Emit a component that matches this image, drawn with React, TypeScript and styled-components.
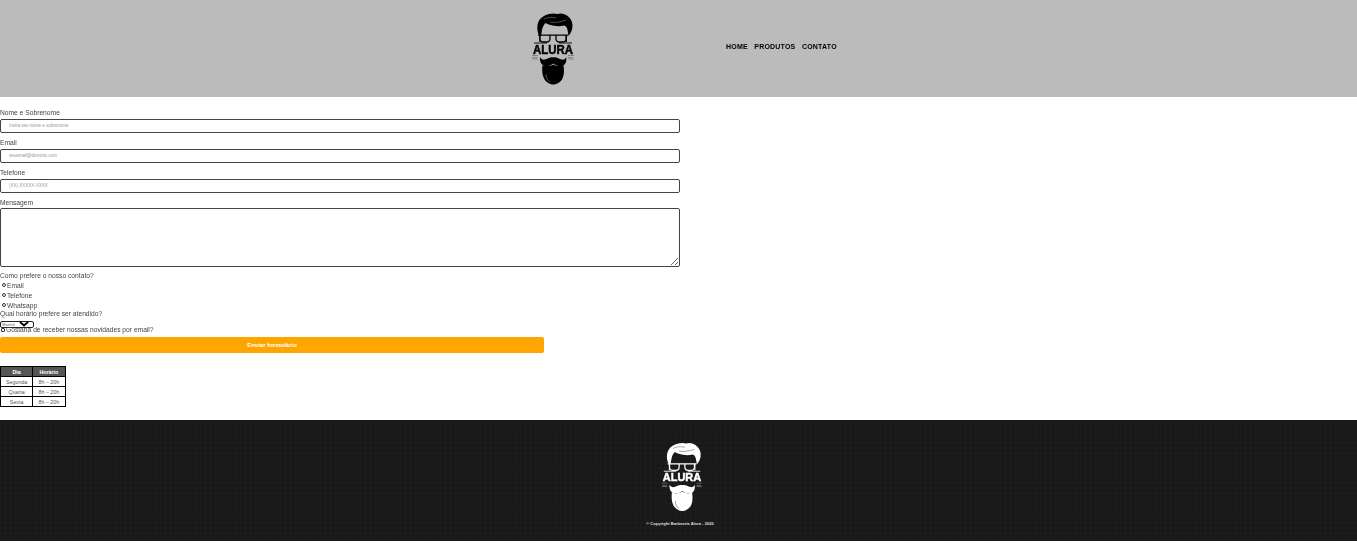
import React from "react";
import styled, { createGlobalStyle, css } from "styled-components";

const Global = createGlobalStyle`
  html, body { margin: 0; padding: 0; background: #fff; }
  body { font-family: "Liberation Sans", Arial, sans-serif; color: #333; overflow: hidden; }
  * { box-sizing: border-box; }
`;

const soft = css`
  filter: blur(0.3px);
`;

const Header = styled.header`
  height: 97px;
  background: #bbb;
  display: flex;
  align-items: center;
  padding-left: 529px;
`;
const LogoWrap = styled.div`
  width: 48px;
  height: 76px;
  display: flex;
  filter: blur(0.5px);
`;
const Nav = styled.nav`
  margin-left: 149px;
  display: flex;
  gap: 6.5px;
  margin-top: -4px;
`;
const NavLink = styled.a`
  font-size: 7px;
  font-weight: 700;
  letter-spacing: 0.2px;
  color: #000;
  ${soft}
`;
const Form = styled.form`
  width: 680px;
  padding-top: 12px;
  display: flex;
  flex-direction: column;
`;
const Label = styled.label<{ $h?: number }>`
  display: block;
  font-size: 6.7px;
  line-height: 8px;
  height: ${(p) => p.$h ?? 10}px;
  color: #444;
  ${soft}
`;
const TextField = styled.input`
  display: block;
  width: 680px;
  height: 14px;
  margin-bottom: 6px;
  border: 1px solid #444;
  border-radius: 2px;
  padding: 0 0 1px 8px;
  font-size: 4.5px;
  font-family: inherit;
  background: #fff;
  &::placeholder { color: #999; }
`;
const Area = styled.textarea`
  display: block;
  width: 680px;
  height: 59px;
  margin-bottom: 5px;
  border: 1px solid #444;
  border-radius: 2px;
  padding: 0;
  background: #fff;
`;
const Option = styled.label`
  display: flex;
  align-items: center;
  height: 10px;
  font-size: 6.7px;
  color: #444;
  padding-left: 2px;
  gap: 1px;
  ${soft}
`;
const Dot = styled.span<{ $square?: boolean }>`
  width: 4px;
  height: 4px;
  border: 1px solid #333;
  border-radius: ${(p) => (p.$square ? "1px" : "50%")};
  background: #fff;
  flex: none;
`;
const SelectBox = styled.div`
  width: 34px;
  height: 7px;
  border: 1px solid #222;
  border-radius: 2px;
  font-size: 4.2px;
  line-height: 5px;
  color: #666;
  padding-left: 1px;
  position: relative;
  background: #fff;
`;
const Chevron = styled.svg`
  position: absolute;
  left: 18px;
  top: -1px;
  width: 10px;
  height: 6px;
`;
const CheckRow = styled.label`
  display: flex;
  align-items: center;
  height: 3px;
  font-size: 6.7px;
  color: #444;
  padding-left: 1px;
  gap: 1px;
  ${soft}
`;
const Send = styled.button`
  width: 544px;
  height: 16px;
  margin-top: 6px;
  border: 0;
  border-radius: 2px;
  background: #ffa500;
  color: #fff;
  font-family: inherit;
  font-weight: 700;
  font-size: 6px;
  padding: 0;
`;
const Table = styled.table`
  margin-top: 13px;
  border-collapse: collapse;
  font-size: 5.3px;
  width: 65.5px;
  table-layout: fixed;
`;
const Th = styled.th`
  height: 10px;
  background: #555;
  color: #fff;
  border: 1px solid #000;
  padding: 0;
  font-weight: 700;
`;
const Td = styled.td`
  height: 10px;
  border: 1px solid #000;
  padding: 0;
  text-align: center;
  color: #555;
  background: #fff;
`;
const Footer = styled.footer`
  margin-top: 13px;
  height: 121px;
  background-color: #1a1a1a;
  background-image:
    repeating-linear-gradient(90deg, rgba(255,255,255,.012) 0 1px, transparent 1px 5px),
    repeating-linear-gradient(0deg, rgba(0,0,0,.1) 0 1px, transparent 1px 5px);
  display: flex;
  flex-direction: column;
  align-items: center;
  padding: 20px 0 0 3px;
`;
const FootLogo = styled.div`
  width: 46px;
  height: 74px;
  margin-left: 3px;
  display: flex;
  filter: blur(0.5px);
`;
const Copy = styled.p`
  margin: 7px 0 0;
  font-size: 4.1px;
  line-height: 6px;
  font-weight: 700;
  color: #ddd;
`;

function Logo({ fg, bg }: { fg: string; bg: string }) {
  const font = "'Liberation Sans', sans-serif";
  return (
    <svg viewBox="0 0 48 76" width="100%" height="100%">
      {/* hair */}
      <path
        fill={fg}
        d="M10.5 25C8 21 7.500 15 9.500 10.500 11.500 6.500 15.500 4 20 3c3-.8 6-.8 8.500 0 3-1.200 6.500-.5 9.500 1.500 3.500 2.500 5.500 6 5.500 10 0 4-1.500 7.500-4 10.500l-1-6c-.5-2.500-1.500-4-3.500-4.500-3 .8-6.500 1-10 .3-3-.5-6-1.500-8.500-2.800-1.500 1.500-3 4-3.500 7l-.8 5z"
      />
      <path fill="none" stroke={bg} strokeWidth=".5" opacity=".8" d="M15 8c4-2 8-2 12-1M21 11c5 1 11 0 16-2" />
      {/* face sides */}
      <path fill="none" stroke={fg} strokeWidth="1" d="M10.800 24v7M37.500 24v7" />
      {/* glasses */}
      <path
        fill="none"
        stroke={fg}
        strokeWidth="1.300"
        d="M9 24.200h30M11 24.200v3.500c0 2 1.500 3.300 3.500 3.300h3c2 0 3.500-1.500 3.500-3.500v-3.300M27 24.200v3.300c0 2 1.500 3.500 3.500 3.500h3c2 0 3.500-1.300 3.500-3.300v-3.500"
      />
      {/* banner lines */}
      <path fill="none" stroke={fg} strokeWidth=".9" d="M5 32h13M30 32h13" />
      <text
        x="24"
        y="42.500"
        textAnchor="middle"
        fontFamily={font}
        fontWeight="700"
        fontSize="12"
        textLength="40"
        lengthAdjust="spacingAndGlyphs"
        fill={fg}
        stroke={fg}
        strokeWidth=".5"
      >
        ALURA
      </text>
      <path fill="none" stroke={fg} strokeWidth=".5" opacity=".6" d="M3 44.500h6M3 48h6M39 44.500h6M39 48h6" />
      <text x="6" y="47.300" textAnchor="middle" fontSize="2.500" fontFamily={font} fill={fg} opacity=".7">EST</text>
      <text x="42" y="47.300" textAnchor="middle" fontSize="2.500" fontFamily={font} fill={fg} opacity=".7">BBY</text>
      {/* moustache */}
      <path
        fill={fg}
        d="M11 46c-.5 4 1 8 5 9 3.500.8 6-1 8.300-2.500 2.300 1.500 5 3.300 8.500 2.500 4-1 5-5 4.500-9-.8 2-2.500 3-4.500 2.500-3-.8-5.500-3-8.500-2-3-1-5.500 1.200-8.500 2-2 .5-3.700-.5-4.800-2.500z"
      />
      {/* beard */}
      <path
        fill={fg}
        d="M13.500 54c3 2 7.500 1 10.800-.5 3.300 1.500 7.800 2.500 10.200.5 .8 5 .7 10-1 13.500-1.800 3.500-5.500 6-9.200 6-3.700 0-7.400-2.500-9.300-6-1.800-3.500-2.200-8.500-1.500-13.500z"
      />
      <path fill="none" stroke={bg} strokeWidth=".6" opacity=".7" d="M17 63c.2 4 1.500 6.500 4 8" />
    </svg>
  );
}

export default function App() {
  return (
    <>
      <Global />
      <Header>
        <LogoWrap><Logo fg="#000" bg="#bbb" /></LogoWrap>
        <Nav>
          <NavLink>HOME</NavLink>
          <NavLink>PRODUTOS</NavLink>
          <NavLink>CONTATO</NavLink>
        </Nav>
      </Header>
      <main>
        <Form>
          <Label>Nome e Sobrenome</Label>
          <TextField placeholder="Insira seu nome e sobrenome" />
          <Label>Email</Label>
          <TextField placeholder="seuemail@dominio.com" />
          <Label>Telefone</Label>
          <TextField placeholder="(XX) XXXXX-XXXX" />
          <Label $h={9}>Mensagem</Label>
          <Area />
          <Label $h={8}>Como prefere o nosso contato?</Label>
          <Option><Dot />Email</Option>
          <Option><Dot />Telefone</Option>
          <Option><Dot />Whatsapp</Option>
          <Label $h={11}>Qual horário prefere ser atendido?</Label>
          <SelectBox>
            Manhã
            <Chevron viewBox="0 0 10 6">
              <path d="M1 1l4 3.500L9 1" fill="none" stroke="#000" strokeWidth="2" />
            </Chevron>
          </SelectBox>
          <CheckRow><Dot $square />Gostaria de receber nossas novidades por email?</CheckRow>
          <Send type="button">Enviar formulário</Send>
        </Form>
        <Table>
          <thead>
            <tr><Th>Dia</Th><Th>Horário</Th></tr>
          </thead>
          <tbody>
            <tr><Td>Segunda</Td><Td>8h – 20h</Td></tr>
            <tr><Td>Quarta</Td><Td>8h – 20h</Td></tr>
            <tr><Td>Sexta</Td><Td>8h – 20h</Td></tr>
          </tbody>
        </Table>
      </main>
      <Footer>
        <FootLogo><Logo fg="#fff" bg="#1a1a1a" /></FootLogo>
        <Copy>© Copyright Barbearia Alura - 2020</Copy>
      </Footer>
    </>
  );
}
